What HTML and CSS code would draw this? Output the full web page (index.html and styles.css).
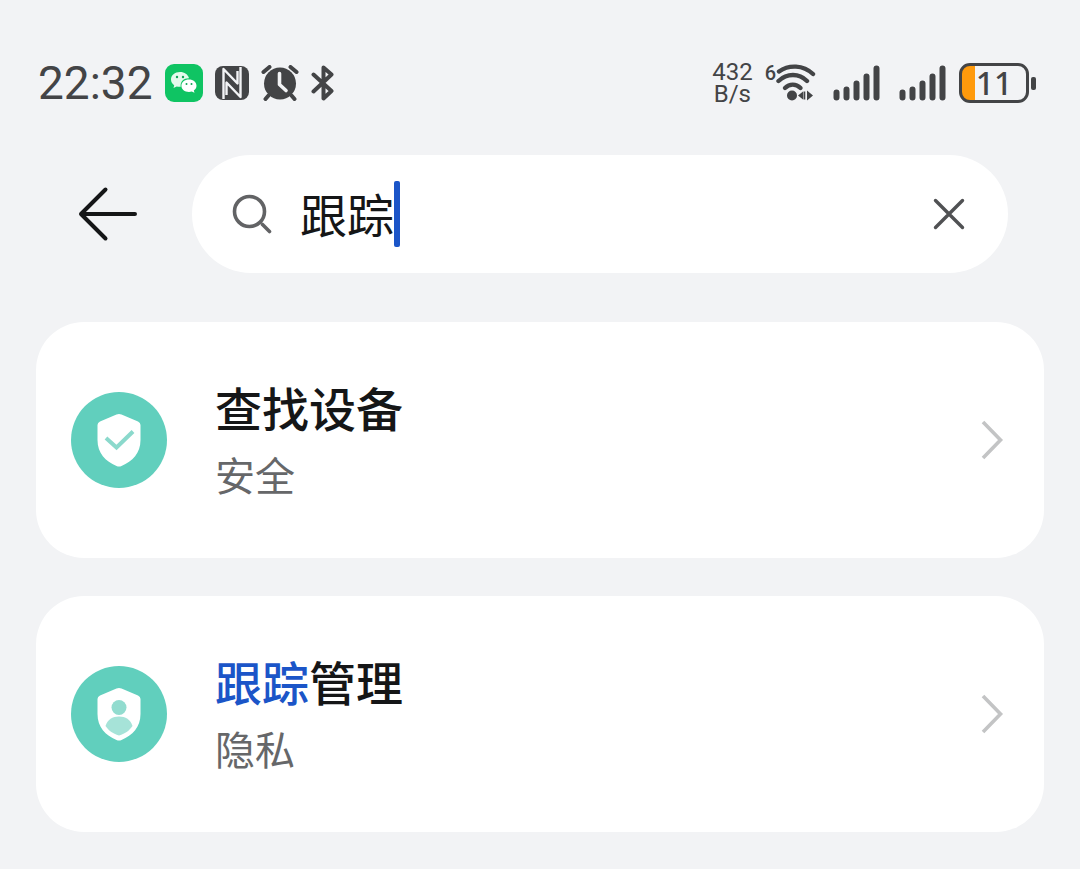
FILE: index.html
```html
<!DOCTYPE html>
<html lang="zh-CN">
<head>
<meta charset="utf-8">
<meta name="viewport" content="width=device-width, initial-scale=1">
<title>跟踪</title>
<link rel="stylesheet" href="styles.css">
</head>
<body>
<header class="status">
  <div class="status-left">
    <time class="clock">22:32</time>
    <svg class="icon" width="38" height="38" viewBox="0 0 38 38" aria-label="微信">
      <rect width="38" height="38" rx="9" fill="#0fc463"/>
      <path d="M15 8C9.800 8 6 11.300 6 15.500c0 2.400 1.200 4.300 3.200 5.700L8.500 24l3.200-1.600c1.300.4 2.400.5 4 .4C15 17.500 19 14 24 14.200 23 10.500 19.500 8 15 8z" fill="#e4faec"/>
      <path d="M24 15.500c-4.400 0-7.600 2.700-7.600 6.200s3.200 6.200 7.600 6.200c1 0 2-.2 2.800-.5l2.700 1.400-.7-2.300c1.700-1.200 2.700-2.900 2.700-4.800 0-3.500-3.200-6.200-7.500-6.200z" fill="#fff"/>
      <g fill="#0fa456"><circle cx="12" cy="13" r="1.200"/><circle cx="18" cy="13" r="1.200"/><circle cx="21.500" cy="20" r="1"/><circle cx="26.500" cy="20" r="1"/></g>
    </svg>
    <svg class="icon" width="34" height="34" viewBox="0 0 34 34" aria-label="NFC">
      <rect width="34" height="34" rx="8" fill="#434446"/>
      <path d="M8.500 33V3L22.500 17.500V5M25.500 1v30L11.500 16.500V29" fill="none" stroke="#f2f3f5" stroke-width="2.400" stroke-linejoin="round"/>
    </svg>
    <svg class="icon" width="38" height="36" viewBox="0 0 38 36" aria-label="闹钟">
      <circle cx="19" cy="18.500" r="16" fill="#434446"/>
      <path d="M2.500 7l6-5M35.500 7l-6-5M7.500 30.500L4.500 34M30.500 30.500l3 3.500" fill="none" stroke="#434446" stroke-width="4" stroke-linecap="round"/>
      <path d="M18.500 8.500v11l6.500 6" fill="none" stroke="#f2f3f5" stroke-width="3.600" stroke-linecap="round" stroke-linejoin="round"/>
    </svg>
    <svg class="icon" width="24" height="36" viewBox="0 0 24 36" aria-label="蓝牙">
      <path d="M2.500 9.500L20.500 26 12.500 33.500V2.500l8 7L2.500 26.500" fill="none" stroke="#434446" stroke-width="4" stroke-linecap="round" stroke-linejoin="round"/>
    </svg>
  </div>
  <div class="status-right">
    <div class="speed"><div>432</div><div>B/s</div></div>
    <div class="wifi">
      <span class="wifi-gen">6</span>
      <svg width="40" height="40" viewBox="0 0 40 40" aria-label="Wi-Fi">
        <g fill="none" stroke="#434446" stroke-width="4.400" stroke-linecap="round">
          <path d="M3 8.500C13 1.500 27 1.800 37 11"/>
          <path d="M2.500 18C11 10 23 10 31 18"/>
          <path d="M9 25C13.500 20.500 20 20.500 24.500 25"/>
        </g>
        <g fill="#434446"><circle cx="16" cy="32.500" r="5"/><path d="M22 32.500l5-4v8zM37 32.500l-6-5v10zM27.500 28.500h1.800v8h-1.800z"/></g>
      </svg>
    </div>
    <svg class="signal" width="47" height="38" viewBox="0 0 47 38" aria-label="信号一">
      <path d="M3.500 28.500v5M13.500 25.500v8M23.500 19.500v14M33.500 12.500v21M43.500 4.500v29" stroke="#434446" stroke-width="6" stroke-linecap="round"/>
    </svg>
    <svg class="signal" width="47" height="38" viewBox="0 0 47 38" aria-label="信号二">
      <path d="M3.500 28.500v5M13.500 25.500v8M23.500 19.500v14M33.500 12.500v21M43.500 4.500v29" stroke="#434446" stroke-width="6" stroke-linecap="round"/>
    </svg>
    <div class="battery"><span class="battery-body">11</span><span class="battery-tip"></span></div>
  </div>
</header>

<form class="search-row" role="search">
  <button class="back" type="button" aria-label="返回">
    <svg width="60" height="56" viewBox="0 0 60 56"><path d="M57 28H3M27.500 3.500L3 28l24.500 24.500" fill="none" stroke="#151617" stroke-width="4" stroke-linecap="round" stroke-linejoin="round"/></svg>
  </button>
  <div class="search-box">
    <svg width="40" height="40" viewBox="0 0 40 40" aria-hidden="true"><g fill="none" stroke="#626365" stroke-width="3.600"><circle cx="17.500" cy="17.500" r="15"/><path d="M30.500 30.500l7 7" stroke-linecap="round"/></g></svg>
    <div class="field">
      <input class="query" type="text" value="跟踪" aria-label="搜索设置">
      <span class="caret"></span>
    </div>
    <button class="clear" type="button" aria-label="清除">
      <svg width="32" height="32" viewBox="0 0 32 32"><path d="M2.500 2.500l27 27M29.500 2.500l-27 27" fill="none" stroke="#505153" stroke-width="3.400" stroke-linecap="round"/></svg>
    </button>
  </div>
</form>

<main class="results">
  <a class="card" href="#find">
    <svg class="badge" width="96" height="96" viewBox="0 0 96 96" aria-hidden="true">
      <circle cx="48" cy="48" r="48" fill="#61cfbd"/>
      <path d="M45.500 22.600q2.500-1.200 5 0L67 29.500q2.500 1 2.500 3.500v15c0 13-8 21.500-19 26q-2.500 1-5 0c-11-4.500-19-13-19-26V33q0-2.500 2.500-3.500z" fill="#fff"/>
      <path d="M35 46l10.500 9.500L62 39.500" fill="none" stroke="#8bd9cc" stroke-width="4"/>
    </svg>
    <div class="text">
      <h2 class="title">查找设备</h2>
      <p class="sub">安全</p>
    </div>
    <svg class="chevron" width="24" height="42" viewBox="0 0 24 42" aria-hidden="true"><path d="M3 3l17.500 18L3 39" fill="none" stroke="#c3c4c5" stroke-width="3.600"/></svg>
  </a>
  <a class="card" href="#tracking">
    <svg class="badge" width="96" height="96" viewBox="0 0 96 96" aria-hidden="true">
      <circle cx="48" cy="48" r="48" fill="#61cfbd"/>
      <path d="M45.500 22.600q2.500-1.200 5 0L67 29.500q2.500 1 2.500 3.500v15c0 13-8 21.500-19 26q-2.500 1-5 0c-11-4.500-19-13-19-26V33q0-2.500 2.500-3.500z" fill="#fff"/>
      <circle cx="48" cy="41.500" r="7.500" fill="#92dccf"/>
      <path d="M34.500 60c2-6.500 7-9.500 13.500-9.500S59.500 53.500 61.500 60c-3 4.500-7 7.500-13.500 9.500-6.500-2-10.500-5-13.500-9.500z" fill="#a6e3d8"/>
    </svg>
    <div class="text">
      <h2 class="title"><mark>跟踪</mark>管理</h2>
      <p class="sub">隐私</p>
    </div>
    <svg class="chevron" width="24" height="42" viewBox="0 0 24 42" aria-hidden="true"><path d="M3 3l17.500 18L3 39" fill="none" stroke="#c3c4c5" stroke-width="3.600"/></svg>
  </a>
</main>
</body>
</html>
```
FILE: styles.css
```css
* { box-sizing: border-box; }

body {
  margin: 0;
  padding: 60px 36px 36px;
  background: #f2f3f5;
  color: #151617;
  font-family: Roboto, "Noto Sans CJK SC", sans-serif;
}

svg { display: block; flex: none; }

button {
  padding: 0;
  border: 0;
  background: none;
  cursor: pointer;
}

.status {
  display: flex;
  justify-content: space-between;
  height: 46px;
  padding: 0 8px 0 2px;
  color: #434446;
}

.status-left,
.status-right {
  display: flex;
  align-items: center;
}

.status-left { gap: 12px; }

.clock {
  font-size: 46px;
  line-height: 46px;
}

.speed {
  margin-right: 12px;
  font-size: 24px;
  line-height: 22px;
  text-align: center;
}

.wifi {
  display: flex;
  margin-right: 17px;
}

.wifi-gen {
  font-size: 20px;
  line-height: 20px;
  font-weight: 500;
}

.signal { margin-right: 19px; }
.signal + .signal { margin-right: 13px; }

.battery {
  display: flex;
  align-items: center;
  gap: 2px;
}

.battery-body {
  width: 70px;
  height: 40px;
  border: 3px solid #434446;
  border-radius: 11px;
  background: linear-gradient(to right, #ff9a0c 13px, transparent 13px);
  font-family: "Noto Sans", sans-serif;
  font-size: 32px;
  font-weight: 500;
  line-height: 34px;
  text-align: center;
}

.battery-tip {
  width: 5px;
  height: 13px;
  border-radius: 2px;
  background: #434446;
}

.search-row {
  display: flex;
  align-items: center;
  gap: 54px;
  margin-top: 49px;
  padding: 0 36px 0 42px;
}

.search-box {
  display: flex;
  flex: 1;
  align-items: center;
  height: 118px;
  padding: 0 43px 0 40px;
  border-radius: 59px;
  background: #fff;
}

.field {
  position: relative;
  flex: 1;
  margin: 0 28px;
}

.query {
  display: block;
  width: 100%;
  height: 66px;
  padding: 0 0 4px;
  border: 0;
  outline: 0;
  background: none;
  color: #151617;
  font-family: "Noto Sans CJK SC", sans-serif;
  font-size: 47px;
}

.caret {
  position: absolute;
  top: 0;
  left: 2em;
  width: 6px;
  height: 66px;
  border-radius: 2px;
  background: #1b55c8;
  font-size: 47px;
}

.results {
  display: grid;
  gap: 38px;
  margin-top: 49px;
}

.card {
  display: flex;
  align-items: center;
  min-height: 236px;
  padding: 0 40px 0 35px;
  border-radius: 48px;
  background: #fff;
  color: inherit;
  text-decoration: none;
}

.text {
  flex: 1;
  margin-left: 48px;
  font-family: "Noto Sans CJK SC", sans-serif;
}

.title {
  margin: 0;
  font-size: 47px;
  line-height: 68px;
  font-weight: 500;
}

.title mark {
  background: none;
  color: #1b55c8;
}

.sub {
  margin: 0;
  color: #666769;
  font-size: 40px;
  line-height: 66px;
}
```
